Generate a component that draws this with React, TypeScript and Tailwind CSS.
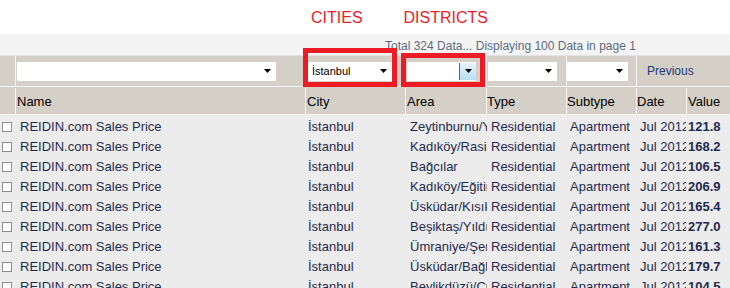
import type { ReactElement } from "react";

// ── data ──────────────────────────────────────────────────────────────────────

const AREAS: [string, string][] = [
  ["Zeytinburnu/Yeşiltepe", "121.8"],
  ["Kadıköy/Rasimpaşa", "168.2"],
  ["Bağcılar", "106.5"],
  ["Kadıköy/Eğitim", "206.9"],
  ["Üsküdar/Kısıklı", "165.4"],
  ["Beşiktaş/Yıldız", "277.0"],
  ["Ümraniye/Şerifali", "161.3"],
  ["Üsküdar/Bağlarbaşı", "179.7"],
  ["Beylikdüzü/Cumhuriyet", "104.5"],
];

// ── pieces ────────────────────────────────────────────────────────────────────

function Arrow(): ReactElement {
  return (
    <svg width="7" height="4" viewBox="0 0 7 4" className="block">
      <path d="M0 0h7L3.5 4z" fill="#000" />
    </svg>
  );
}

function FakeSelect({
  width,
  value,
  hot,
}: {
  width: string;
  value?: string;
  hot?: boolean;
}): ReactElement {
  return (
    <div className={`flex h-[19px] items-center bg-white ${width}`}>
      <span className="flex-1 truncate pl-[4px] text-[11px] leading-[19px] text-black">
        {value}
      </span>
      {hot ? (
        <div className="flex h-[17px] w-[17px] items-center justify-center border-l border-[#3c6d9a] bg-gradient-to-b from-[#e6f4fc] to-[#b6ddf5]">
          <Arrow />
        </div>
      ) : (
        <div className="pr-[5px]">
          <Arrow />
        </div>
      )}
    </div>
  );
}

// ── page ──────────────────────────────────────────────────────────────────────

export default function App(): ReactElement {
  return (
    <div className="relative h-[288px] w-[730px] overflow-hidden bg-white font-['Liberation_Sans',Arial,sans-serif]">
      {/* Title labels */}
      <div className="flex h-[34px] pl-[311px] pt-[10px] text-[16px] leading-4 text-[#ee1c25]">
        <span>CITIES</span>
        <span className="ml-[41px]">DISTRICTS</span>
      </div>

      {/* Paging info */}
      <div className="h-[21px] whitespace-nowrap bg-[#f4f4f4] pl-[385px] pt-[2px] text-[12px] leading-[21px] text-[#5d6b80]">
        Total 324 Data... Displaying 100 Data in page 1
      </div>

      {/* Filter row */}
      <div className="relative flex h-[31px] border-t border-[#e2e2e2] bg-[#d4d0c8]">
        <div className="w-[15px]" />
        <div className="flex w-[290px] items-center border-l border-[#f4f4f4] pl-[1px]">
          <FakeSelect width="w-[259px]" />
        </div>
        <div className="flex w-[100px] items-center border-l border-[#f4f4f4] pl-[2px]">
          <FakeSelect width="w-[84px]" value="İstanbul" />
        </div>
        <div className="flex w-[81px] items-center border-l border-[#f4f4f4] pl-[1px]">
          <FakeSelect width="w-[69px]" hot />
        </div>
        <div className="flex w-[80px] items-center border-l border-[#f4f4f4] pl-[1px]">
          <FakeSelect width="w-[69px]" />
        </div>
        <div className="flex w-[70px] items-center border-l border-[#f4f4f4] pl-[0px]">
          <FakeSelect width="w-[61px]" />
        </div>
        <div className="flex flex-1 items-center border-l border-[#f4f4f4] pl-[10px] text-[12px] text-[#1f3a78]">
          Previous
        </div>
      </div>

      {/* Header row */}
      <div className="flex h-[29px] border-y border-[#f4f4f4] bg-[#d4d0c8] pt-[1px] text-[13px] leading-[27px] text-black">
        <div className="w-[15px]" />
        <div className="w-[290px] border-l border-[#f4f4f4] pl-[1px]">Name</div>
        <div className="w-[100px] border-l border-[#f4f4f4] pl-[1px]">City</div>
        <div className="w-[81px] border-l border-[#f4f4f4] pl-[1px]">Area</div>
        <div className="w-[80px] border-l border-[#f4f4f4]">Type</div>
        <div className="w-[70px] border-l border-[#f4f4f4]">Subtype</div>
        <div className="w-[50px] border-l border-[#f4f4f4]">Date</div>
        <div className="flex-1 border-l border-[#f4f4f4] pl-[1px]">Value</div>
      </div>

      {/* Body */}
      <div className="h-full bg-[#ececec] pt-[2px] text-[13px] leading-5 text-[#1f2a50]">
        {AREAS.map(([area, value], i) => (
          <div key={i} className="flex h-5 whitespace-nowrap">
            <div className="w-[20px] pl-[2px] pt-[5px]">
              <div className="h-[10px] w-[10px] border border-[#8c8c8c] bg-white" />
            </div>
            <div className="w-[288px]">REIDIN.com Sales Price</div>
            <div className="w-[102px]">İstanbul</div>
            <div className="mr-[4px] w-[77px] overflow-hidden">{area}</div>
            <div className="w-[79px]">Residential</div>
            <div className="w-[70px]">Apartment</div>
            <div className="mr-[2px] w-[46px] overflow-hidden">Jul 2012</div>
            <div className="font-bold">{value}</div>
          </div>
        ))}
      </div>

      {/* Highlight boxes */}
      <div className="pointer-events-none absolute left-[303px] top-[48px] h-[39px] w-[94px] border-[5px] border-[#ed1c24]" />
      <div className="pointer-events-none absolute left-[401px] top-[53px] h-[34px] w-[84px] border-[5px] border-[#ed1c24]" />
    </div>
  );
}
